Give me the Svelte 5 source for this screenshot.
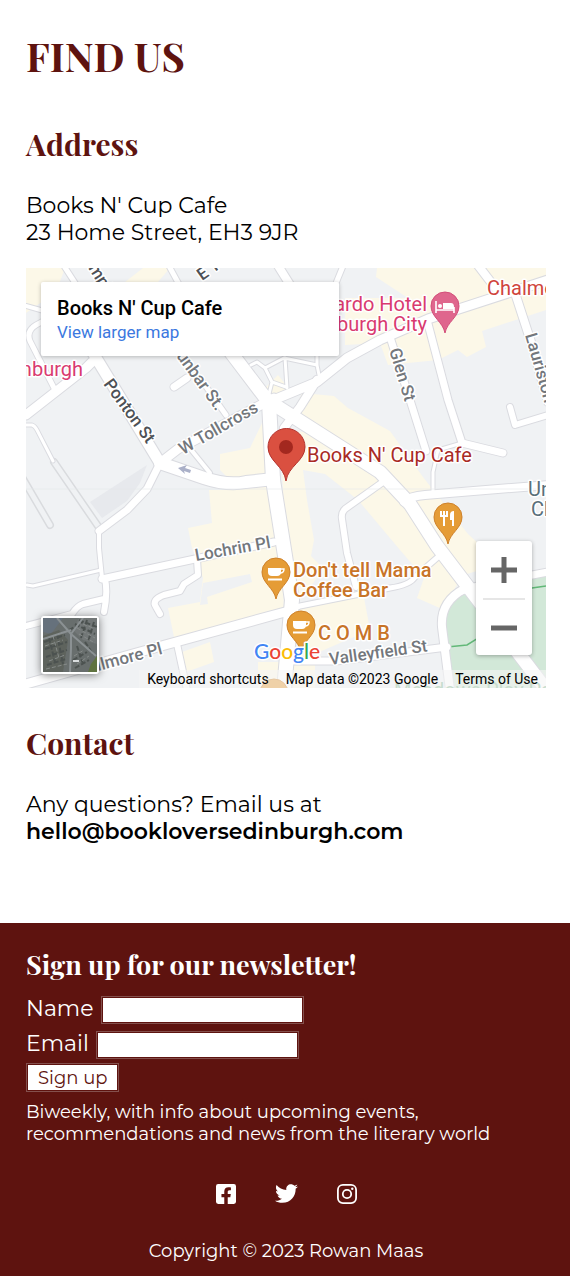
<script>
  let name = $state('');
  let email = $state('');

  // Street geometry: path and carriageway width
  const streets = [
    ['M27 585 33 586 101 570', 3],
    ['M99 530 99 548 102 578', 4],
    ['M26 425H32Q35 426 37 430L53 461', 3],
    ['M26 306 44 311', 4],
    ['M64 266 77 286', 5],
    ['M169 266 181 288', 5],
    ['M54 388 30 341Q26 331 36 325L60 312', 5],
    ['M251 365 257 362 265 368 272 382 286 387M265 368 284 358 317 365 319 375M285 358 287 388M272 382 269 394M317 350V366', 3],
    ['M188 446 210 473', 4],
    ['M187 378 174 387', 7],
    ['M200 378 226 415', 5],
    ['M343 266 334 288', 5],
    ['M277 264 292 288', 8],
    ['M462 443 438 450 433 472 433 492', 3],
    ['M477 264 500 294', 8],
    ['M390 337 410 400 426 451', 7],
    ['M427 320 448 400 462 443 503 453', 7],
    ['M516 296 531 342 548 402', 8],
    ['M510 407 515 425 548 415', 6],
    ['M404 502Q410 496 425 495L548 485', 8],
    ['M383 482 345 509Q341 513 342 519L347 553 356 587', 6],
    ['M284 613 300 606 390 588Q410 585 415 577L438 557', 5],
    ['M294 661H336L447 647', 7],
    ['M177 644 187 690', 6],
    ['M197 559 198 575 184 584 180 591 164 595Q151 600 156 607L160 614', 6],
    ['M102 579 274 542', 7],
    ['M105 579Q108 592 104 612M104 599 83 604Q77 606 72 614L26 626', 6],
    ['M26 684 165 645 285 612', 9],
    ['M26 415 86 368 92 362', 9],
    ['M160 463 147 489 127 510 99 531', 7],
    ['M84 338 160 463', 11],
    ['M160 463 178 449 274 398', 9],
    ['M462 591 480 585 548 572', 7],
    ['M464 589Q440 602 442 627L450 690', 8],
    ['M317 380 300 407 284 428', 8],
    ['M271 401 317 382 347 358 380 340 428 319 548 280', 9],
    ['M160 463 204 478Q228 486 246 482L274 479', 12],
    ['M269 402 273 480 292 600 284 690', 14],
    ['M220 338 267 400 380 472 410 504 437 546 548 692', 13]
  ];

  const blocks = [
    'M26 268H65L56 292 26 313Z',
    'M143 268H170L158 282H125Z',
    'M377 268H546V310L482 331 486 347 467 357 458 350 438 360 388 365 380 343 345 345 345 298 408 298 376 277Z',
    'M265 388 278 375 290 390 270 402Z',
    'M302 393 334 396 348 408 390 431 423 477 468 534 480 545V570L467 574 430 540 380 480 290 420Z',
    'M280 430 305 432 379 480 420 514 460 580 442 609 417 598 424 578 400 550 358 500 325 474 303 470 307 500 314 540 311 556 324 569 300 600 288 590Z',
    'M263 421 250 448 220 454V470L240 490H209L212 523 188 528 192 548 203 578 200 602 168 608 175 642 284 612 280 485 267 480Z',
    'M300 605 363 592 370 630 310 656 297 657Z',
    'M182 652 210 642 214 662 186 672Z',
    'M258 662H315V688H258Z'
  ];

  // x, y, rotation, text
  const roads = [
    [103, 384, 54, 'Ponton St', 'dark'],
    [176, 356, 54, 'unbar St.', ''],
    [183, 455, -30, 'W Tollcross', ''],
    [389, 350, 73, 'Glen St', ''],
    [525, 335, 74, 'Lauriston', ''],
    [196, 561, -10, 'Lochrin Pl', ''],
    [98, 671, -15, 'ilmore Pl', ''],
    [330, 665, -8, 'Valleyfield St', ''],
    [88, 268, 58, 'mpl', 'dark'],
    [202, 281, -35, 'E T', 'dark']
  ];
</script>

{#snippet pin(x, y, kind)}
  <g transform="translate({x} {y})">
    <path class="pin {kind}" d="M0 40C-2 29-14 24-14 13a14 14 0 0 1 28 0C14 24 2 29 0 40Z" />
    {#if kind === 'hotel'}
      <path d="M-9 8V20M9 14V20M-9 17H9" stroke="#fff" stroke-width="1.6" />
      <path d="M-2 10H6Q9 10 9 14V16H-2Z" fill="#fff" />
      <circle cx="-5" cy="13" r="2" fill="#fff" />
    {:else if kind === 'food'}
      <path d="M-7 7V12H-1V7M-4 7V22" fill="none" stroke="#fff" stroke-width="2" />
      <path d="M6 7V22H4V16H2V11Q2 7 6 7Z" fill="#fff" />
    {:else}
      <path d="M-8 9H5V13Q5 17 1 17H-4Q-8 17-8 13Z" fill="#fff" />
      <path d="M5 10H8Q8 14 4 14" fill="none" stroke="#fff" stroke-width="1.400" />
      <path d="M-8 20.500H6" stroke="#fff" stroke-width="2" />
    {/if}
  </g>
{/snippet}

<main>
  <h1>FIND US</h1>

  <section>
    <h2>Address</h2>
    <p>Books N' Cup Cafe<br />23 Home Street, EH3 9JR</p>

    <div class="map">
      <svg class="canvas" viewBox="26 268 520 420" role="img" aria-label="Map">
        <rect x="26" y="268" width="520" height="420" fill="#f0f2f4" />
        {#each blocks as d}<path {d} fill="#fcf8e8" />{/each}
        <path d="M203 583 250 574 252 582 207 597 208 604 200 605Z" fill="#eff1f3" />
        <path d="M147 465 90 502 102 518 127 501 140 483Z" fill="#e7e9ed" />
        <path d="M460 592 546 575V688H450L443 640V610Z" fill="#d2e8d8" />
        <path d="M54 462 100 529M12 460 50 525" fill="none" stroke="#d9dbde" stroke-width="8" stroke-linecap="round" />
        <path d="M54 462 100 529M12 460 50 525" fill="none" stroke="#f0f2f4" stroke-width="5" stroke-linecap="round" />
        <path d="M447 647 467 645 480 637 532 588 546 586" fill="none" stroke="#62b878" stroke-width="1.500" />
        <g class="casing">
          {#each streets as [d, w]}<path {d} stroke-width={w + 2} />{/each}
        </g>
        <g class="lane">
          {#each streets as [d, w]}<path {d} stroke-width={w} />{/each}
        </g>
        <path d="M26 489H546" stroke="#e5e7e9" stroke-opacity=".6" />
        <path d="m178 468 9-3-2 3 6 2-1 3-6-2 1 3Z" fill="#aab0c8" />

        {#each roads as [x, y, a, label, tone]}
          <text class="road {tone}" transform="translate({x} {y}) rotate({a})">{label}</text>
        {/each}
        <text class="place pink" x="83" y="376" text-anchor="end">nburgh</text>
        <text class="place pink" x="427" y="311" text-anchor="end">ardo Hotel</text>
        <text class="place pink" x="427" y="331" text-anchor="end">burgh City</text>
        <text class="place red" x="487" y="295">Chalme</text>
        <text class="place slate" x="528" y="496">Un</text>
        <text class="place slate" x="531" y="516">Ch</text>
        <text class="place brick" x="307" y="462">Books N' Cup Cafe</text>
        <text class="place orange" x="293" y="577">Don't tell Mama</text>
        <text class="place orange" x="293" y="597">Coffee Bar</text>
        <text class="place orange" x="318" y="640">C O M B</text>
        <text class="place park" x="394" y="697">Meadows Play Pa</text>

        {@render pin(445, 293, 'hotel')}
        {@render pin(448, 504, 'food')}
        {@render pin(276, 559, 'cafe')}
        {@render pin(301, 612, 'cafe')}
        {@render pin(274, 680, 'cafe')}
        <path d="M286 481C284 466 268 461 268 447a18 18 0 0 1 37 0C305 461 288 466 286 481Z" fill="#da5040" stroke="#b3312c" />
        <circle cx="286" cy="447" r="7" fill="#a3281f" />

        <text class="google" x="254" y="659"><tspan fill="#4285f4">G</tspan><tspan fill="#ea4335">o</tspan><tspan fill="#fbbc05">o</tspan><tspan fill="#4285f4">g</tspan><tspan fill="#34a853">l</tspan><tspan fill="#ea4335">e</tspan></text>
      </svg>

      <div class="card">
        <strong>Books N' Cup Cafe</strong>
        <a href="#map">View larger map</a>
      </div>

      <button class="satellite" aria-label="Show satellite imagery">
        <svg viewBox="0 0 54 54">
          <rect width="54" height="54" fill="#686e6d" />
          <path d="M0 0H20L8 16 0 14Z" fill="#66717c" />
          <path d="M0 18 16 12 25 22 20 54H0Z" fill="#5e635d" />
          <path d="M36 0H54V26L40 22 30 12Z" fill="#727777" />
          <path d="M48 46 54 38V54H45Z" fill="#5f7340" />
          <path d="M1 24 22 17M2 31 24 24M3 39 24 32M4 47 23 41M6 20 12 44M14 16 20 46M32 6 52 16M36 2 54 9M34 28 40 46M42 24 50 36M30 42 44 34M32 50 46 42M26 12 40 4M44 2 38 20M51 4 45 24" stroke="#4c5250" stroke-width="2" stroke-dasharray="5 2" fill="none" />
          <path d="M2 28 20 22M6 43 22 37M3 51 24 46M34 10 52 20M31 38 41 32M34 46 46 38M10 18 16 40M40 6 50 10M36 16 52 25" stroke="#868b89" stroke-dasharray="4 2" fill="none" />
          <path d="M14 0 28 16 28 30 27 54M28 16 53 38M28 16 40 0M0 21 28 12" stroke="#8b9193" stroke-width="2" fill="none" />
          <path d="M30 43H36" stroke="#d8dcdd" stroke-width="2" />
        </svg>
      </button>

      <div class="zoom">
        <button aria-label="Zoom in"><svg viewBox="0 0 26 26"><path d="M0 13H26M13 0V26" /></svg></button>
        <button aria-label="Zoom out"><svg viewBox="0 0 26 26"><path d="M0 13H26" /></svg></button>
      </div>

      <div class="credits">
        <button>Keyboard shortcuts</button>
        <span>Map data ©2023 Google</span>
        <a href="#terms">Terms of Use</a>
      </div>
    </div>
  </section>

  <section>
    <h2>Contact</h2>
    <p>Any questions? Email us at<br /><b>hello@bookloversedinburgh.com</b></p>
  </section>
</main>

<footer>
  <h2>Sign up for our newsletter!</h2>
  <form onsubmit={(e) => e.preventDefault()}>
    <div class="field">
      <label for="name">Name</label>
      <input id="name" type="text" bind:value={name} />
    </div>
    <div class="field">
      <label for="email">Email</label>
      <input id="email" type="email" bind:value={email} />
    </div>
    <button class="submit">Sign up</button>
  </form>
  <p class="note">Biweekly, with info about upcoming events, recommendations and news from the literary world</p>

  <nav>
    <a href="#facebook" aria-label="Facebook">
      <svg width="20" height="20" viewBox="0 32 448 448"><path fill="currentColor" d="M400 32H48A48 48 0 0 0 0 80v352a48 48 0 0 0 48 48h137.250V327.690h-63V256h63v-54.640c0-62.150 37-96.480 93.670-96.480 27.140 0 55.520 4.840 55.520 4.840v61h-31.270c-30.810 0-40.420 19.120-40.420 38.730V256h68.780l-11 71.690h-57.780V480H400a48 48 0 0 0 48-48V80a48 48 0 0 0-48-48z" /></svg>
    </a>
    <a href="#twitter" aria-label="Twitter">
      <svg width="23" height="23" viewBox="0 0 512 512"><path fill="currentColor" d="M459.370 151.716c.325 4.548.325 9.097.325 13.645 0 138.720-105.583 298.558-298.558 298.558-59.452 0-114.680-17.219-161.137-47.106 8.447.974 16.568 1.299 25.340 1.299 49.055 0 94.213-16.568 130.274-44.832-46.132-.975-84.792-31.188-98.112-72.772 6.498.974 12.995 1.624 19.818 1.624 9.421 0 18.843-1.300 27.614-3.573-48.081-9.747-84.143-51.980-84.143-102.985v-1.299c13.969 7.797 30.214 12.670 47.431 13.319-28.264-18.843-46.781-51.005-46.781-87.391 0-19.492 5.197-37.360 14.294-52.954 51.655 63.675 129.300 105.258 216.365 109.807-1.624-7.797-2.599-15.918-2.599-24.040 0-57.828 46.782-104.934 104.934-104.934 30.213 0 57.502 12.670 76.670 33.137 23.715-4.548 46.456-13.320 66.599-25.340-7.798 24.366-24.366 44.833-46.132 57.827 21.117-2.273 41.584-8.122 60.426-16.243-14.292 20.791-32.161 39.308-52.628 54.253z" /></svg>
    </a>
    <a href="#instagram" aria-label="Instagram">
      <svg width="20" height="20" viewBox="0 0 20 20" fill="none" stroke="currentColor" stroke-width="1.800"><rect x=".9" y=".9" width="18.200" height="18.200" rx="5" /><circle cx="10" cy="10" r="4.200" /><circle cx="15.300" cy="4.700" r="1.200" fill="currentColor" stroke="none" /></svg>
    </a>
  </nav>
  <p class="copyright">Copyright © 2023 Rowan Maas</p>
</footer>

<style>
  :global(body) {
    margin: 0;
    background: #fff;
    color: #000;
    font-family: Montserrat, Inter, sans-serif;
    font-size: 22px;
    line-height: 27px;
  }
  main {
    padding: 32px 24px 78px 26px;
  }
  h1,
  h2 {
    margin: 0;
    color: #5e130f;
    font-family: 'Playfair Display', 'Liberation Serif', serif;
    font-weight: 700;
  }
  h1 {
    font-size: 40px;
    line-height: 48px;
    margin-bottom: 45px;
  }
  h2 {
    font-size: 30px;
    line-height: 38px;
    margin-bottom: 29px;
  }
  p {
    margin: 0;
  }
  b {
    font-weight: 600;
  }
  section + section {
    margin-top: 36px;
  }
  button {
    font: inherit;
    border: 0;
    padding: 0;
    cursor: pointer;
  }

  .map {
    position: relative;
    margin-top: 22px;
    overflow: hidden;
    font-family: Roboto, sans-serif;
  }
  .canvas {
    display: block;
    width: 100%;
  }
  .casing,
  .lane {
    fill: none;
    stroke-linecap: round;
    stroke-linejoin: round;
  }
  .casing {
    stroke: #dadbe0;
  }
  .lane {
    stroke: #fff;
  }
  text {
    font-size: 20px;
    paint-order: stroke;
    stroke: #fff;
    stroke-width: 3px;
    stroke-linejoin: round;
  }
  .road {
    font-size: 17px;
    font-weight: 500;
    fill: #73777c;
  }
  .dark {
    fill: #4d5156;
  }
  .pink {
    fill: #d93a70;
  }
  .red {
    fill: #d0453c;
  }
  .slate {
    fill: #5a6f7a;
  }
  .brick {
    fill: #a92a25;
  }
  .orange {
    fill: #c87428;
    font-weight: 500;
  }
  .park {
    fill: #86b893;
    stroke: none;
  }
  .google {
    font-family: Lato, sans-serif;
    font-size: 21px;
    font-weight: 500;
  }
  .pin {
    fill: #e59c36;
    stroke: #ce812a;
  }
  .pin.hotel {
    fill: #df668d;
    stroke: #d34f7a;
  }

  .card {
    position: absolute;
    top: 14px;
    left: 15px;
    box-sizing: border-box;
    width: 298px;
    height: 74px;
    padding: 14px 16px;
    display: flex;
    flex-direction: column;
    border-radius: 2px;
    background: #fff;
    box-shadow: 0 1px 4px rgba(0, 0, 0, 0.25);
    font-size: 17px;
    line-height: 24px;
  }
  .card strong {
    font-size: 20px;
    font-weight: 500;
  }
  .card a {
    color: #3b78e0;
    text-decoration: none;
  }
  .satellite {
    position: absolute;
    left: 15px;
    bottom: 14px;
    padding: 2px;
    border-radius: 3px;
    background: #fff;
    box-shadow: 0 1px 8px rgba(0, 0, 0, 0.5);
  }
  .satellite svg {
    display: block;
    width: 54px;
    height: 54px;
  }
  .zoom {
    position: absolute;
    right: 14px;
    bottom: 33px;
    width: 56px;
    border-radius: 3px;
    background: #fff;
    box-shadow: 0 1px 4px rgba(0, 0, 0, 0.3);
  }
  .zoom button {
    display: grid;
    place-items: center;
    width: 42px;
    height: 57px;
    margin: 0 auto;
    background: none;
  }
  .zoom button + button {
    border-top: 2px solid #e6e6e6;
  }
  .zoom svg {
    width: 26px;
    height: 26px;
    stroke: #666;
    stroke-width: 5px;
  }
  .credits {
    position: absolute;
    right: 0;
    bottom: 0;
    display: flex;
    gap: 17px;
    padding: 0 8px;
    background: rgba(245, 245, 245, 0.6);
    font-size: 14px;
    line-height: 18px;
  }
  .credits button {
    background: none;
  }
  .credits a,
  .credits button {
    color: #000;
    text-decoration: none;
  }

  footer {
    padding: 22px 24px 14px 26px;
    background: #5e130f;
    color: #fff;
  }
  footer h2 {
    color: #fff;
    font-size: 27px;
    margin-bottom: 13px;
  }
  form {
    display: flex;
    flex-direction: column;
    align-items: flex-start;
    gap: 7px;
  }
  .field {
    display: flex;
    gap: 7px;
  }
  .field label {
    line-height: 25px;
  }
  .field input,
  .submit {
    box-sizing: border-box;
    border: 1px solid #84504d;
    border-radius: 0;
    background: #fff;
    box-shadow: inset 0 0 0 1px #5e130f;
    font-size: 18px;
  }
  .field input {
    width: 203px;
    height: 28px;
    padding: 2px 4px;
    font-family: inherit;
  }
  .submit {
    height: 29px;
    margin-top: -3px;
    padding: 0 11px;
    color: #5e130f;
    line-height: 24px;
  }
  .note,
  .copyright {
    font-size: 18px;
    line-height: 22px;
  }
  .note {
    margin-top: 9px;
  }
  nav {
    display: flex;
    align-items: center;
    justify-content: center;
    gap: 39px;
    margin-top: 37px;
  }
  nav a {
    display: flex;
    color: #fff;
  }
  .copyright {
    margin-top: 35px;
    text-align: center;
  }
</style>
